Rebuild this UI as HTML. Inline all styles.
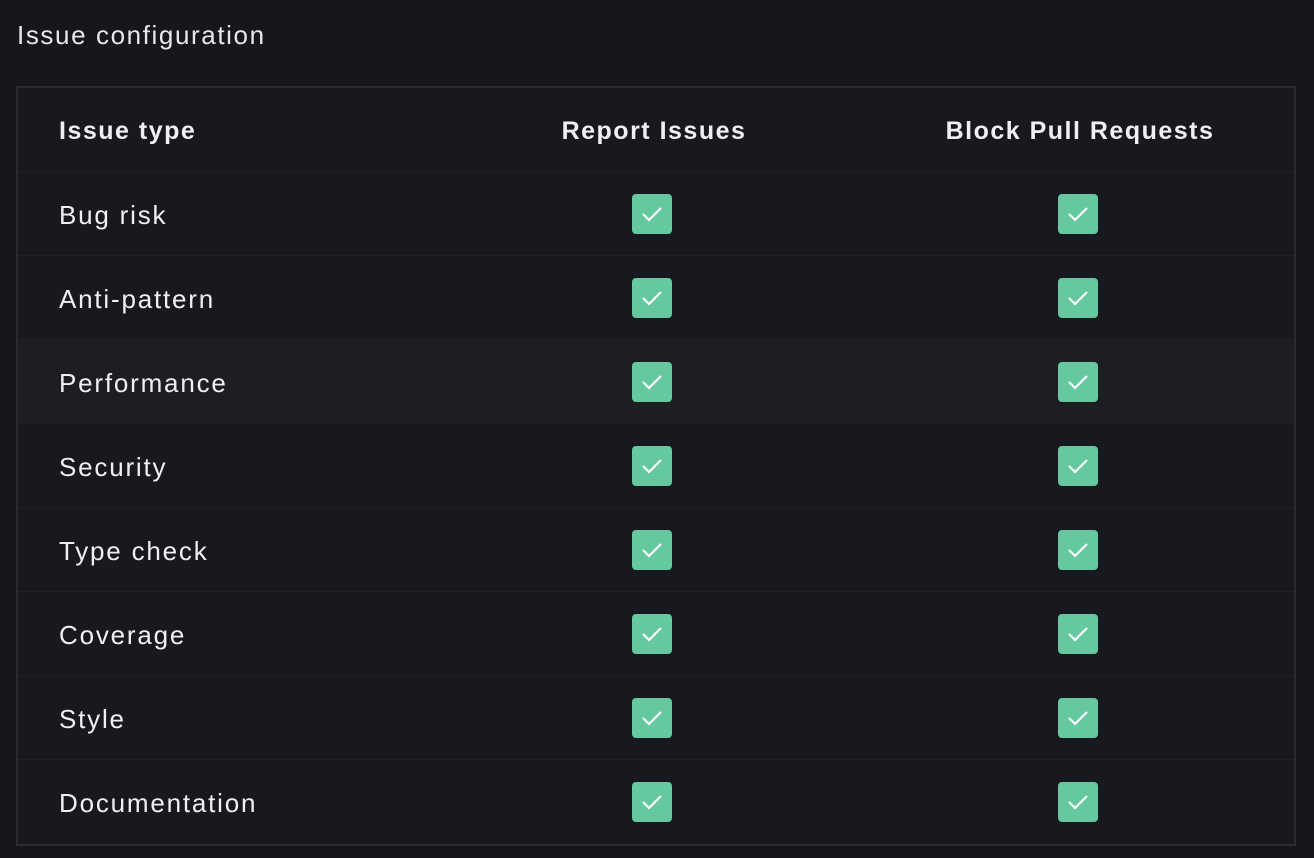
<!DOCTYPE html>
<html><head><meta charset="utf-8"><style>
*{margin:0;padding:0;box-sizing:border-box}
body{width:1314px;height:858px;background:#16171b;font-family:"Liberation Sans",sans-serif;color:#f0f0f2;position:relative;overflow:hidden}
.title{position:absolute;left:17px;top:18px;font-size:26px;line-height:34px;color:#e8e8ea;letter-spacing:1.6px}
.tbl{position:absolute;left:16px;top:86px;width:1280px;height:760px;border:2px solid #2a2b30;background:#18191e}
.row{position:absolute;left:0;width:1276px;height:84px;border-top:1px solid #202126}
.row.h{background:#1d1e22}
.row .l{position:absolute;left:41px;top:1px;line-height:84px;font-size:26px;letter-spacing:1.8px}
.hd{font-weight:bold;font-size:25px;position:absolute;line-height:84px;top:1px;letter-spacing:1.5px}
.cb{position:absolute;top:22px;width:40px;height:40px;background:#65c89e;border-radius:4px}
.cb svg{position:absolute;left:9px;top:11px}
</style></head><body>
<div class="title">Issue configuration</div>
<div class="tbl">
<div class="row" style="top:0;border-top:none">
<span class="hd" style="left:41px">Issue type</span>
<span class="hd" style="left:424px;width:424px;text-align:center">Report Issues</span>
<span class="hd" style="left:848px;width:428px;text-align:center">Block Pull Requests</span>
</div>
<div class="row" style="top:83px"><span class="l">Bug risk</span><div class="cb" style="left:614px"><svg width="22" height="18"><path d="M2 9 L8 15 L20 3" stroke="#fff" stroke-width="2.2" fill="none"/></svg></div><div class="cb" style="left:1040px"><svg width="22" height="18"><path d="M2 9 L8 15 L20 3" stroke="#fff" stroke-width="2.2" fill="none"/></svg></div></div>
<div class="row" style="top:167px"><span class="l">Anti-pattern</span><div class="cb" style="left:614px"><svg width="22" height="18"><path d="M2 9 L8 15 L20 3" stroke="#fff" stroke-width="2.2" fill="none"/></svg></div><div class="cb" style="left:1040px"><svg width="22" height="18"><path d="M2 9 L8 15 L20 3" stroke="#fff" stroke-width="2.2" fill="none"/></svg></div></div>
<div class="row h" style="top:251px"><span class="l">Performance</span><div class="cb" style="left:614px"><svg width="22" height="18"><path d="M2 9 L8 15 L20 3" stroke="#fff" stroke-width="2.2" fill="none"/></svg></div><div class="cb" style="left:1040px"><svg width="22" height="18"><path d="M2 9 L8 15 L20 3" stroke="#fff" stroke-width="2.2" fill="none"/></svg></div></div>
<div class="row" style="top:335px"><span class="l">Security</span><div class="cb" style="left:614px"><svg width="22" height="18"><path d="M2 9 L8 15 L20 3" stroke="#fff" stroke-width="2.2" fill="none"/></svg></div><div class="cb" style="left:1040px"><svg width="22" height="18"><path d="M2 9 L8 15 L20 3" stroke="#fff" stroke-width="2.2" fill="none"/></svg></div></div>
<div class="row" style="top:419px"><span class="l">Type check</span><div class="cb" style="left:614px"><svg width="22" height="18"><path d="M2 9 L8 15 L20 3" stroke="#fff" stroke-width="2.2" fill="none"/></svg></div><div class="cb" style="left:1040px"><svg width="22" height="18"><path d="M2 9 L8 15 L20 3" stroke="#fff" stroke-width="2.2" fill="none"/></svg></div></div>
<div class="row" style="top:503px"><span class="l">Coverage</span><div class="cb" style="left:614px"><svg width="22" height="18"><path d="M2 9 L8 15 L20 3" stroke="#fff" stroke-width="2.2" fill="none"/></svg></div><div class="cb" style="left:1040px"><svg width="22" height="18"><path d="M2 9 L8 15 L20 3" stroke="#fff" stroke-width="2.2" fill="none"/></svg></div></div>
<div class="row" style="top:587px"><span class="l">Style</span><div class="cb" style="left:614px"><svg width="22" height="18"><path d="M2 9 L8 15 L20 3" stroke="#fff" stroke-width="2.2" fill="none"/></svg></div><div class="cb" style="left:1040px"><svg width="22" height="18"><path d="M2 9 L8 15 L20 3" stroke="#fff" stroke-width="2.2" fill="none"/></svg></div></div>
<div class="row" style="top:671px"><span class="l">Documentation</span><div class="cb" style="left:614px"><svg width="22" height="18"><path d="M2 9 L8 15 L20 3" stroke="#fff" stroke-width="2.2" fill="none"/></svg></div><div class="cb" style="left:1040px"><svg width="22" height="18"><path d="M2 9 L8 15 L20 3" stroke="#fff" stroke-width="2.2" fill="none"/></svg></div></div>
</div>
</body></html>
